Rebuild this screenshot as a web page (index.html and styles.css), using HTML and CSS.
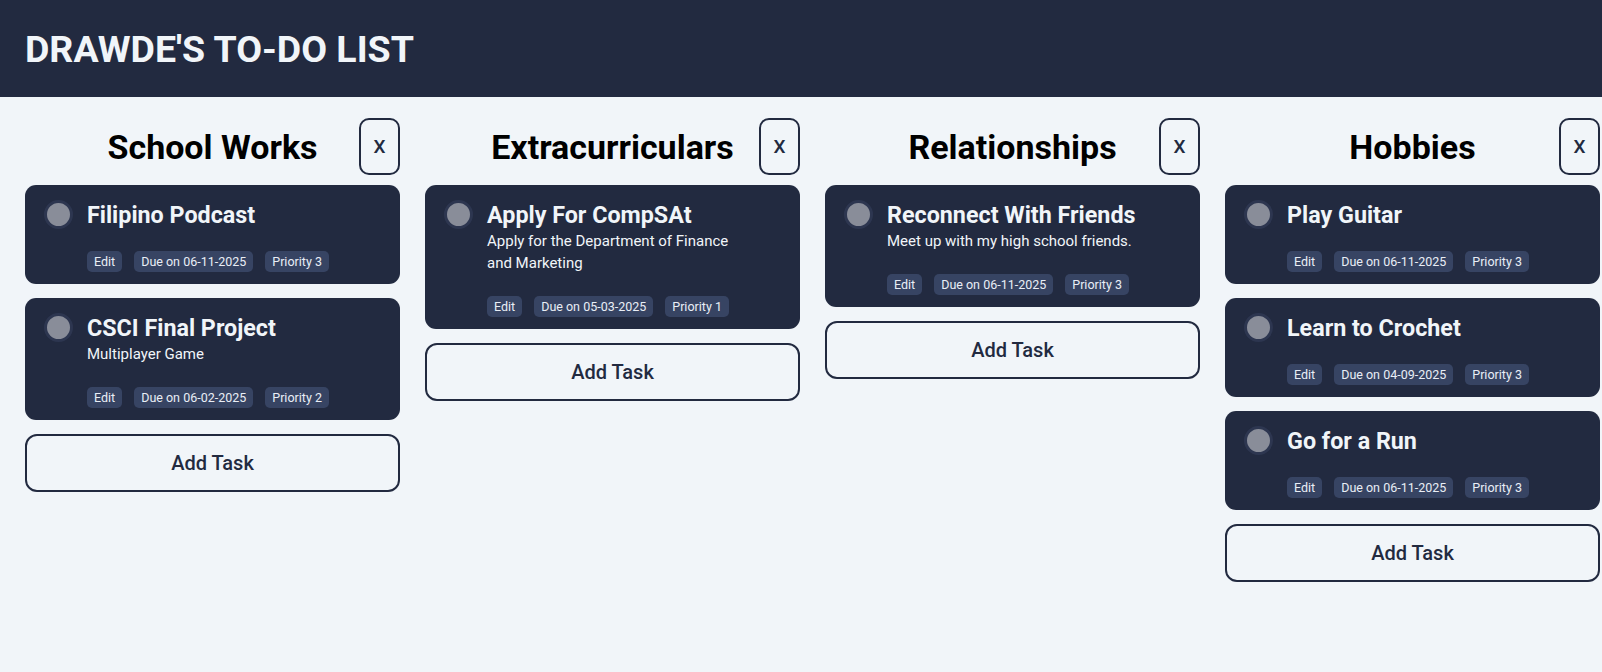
FILE: index.html
```html
<!DOCTYPE html>
<html lang="en">
<head>
<meta charset="utf-8">
<title>Drawde's To-Do List</title>
<link rel="stylesheet" href="styles.css">
</head>
<body>
<header class="topbar">
  <h1 class="app-title">DRAWDE'S TO-DO LIST</h1>
</header>
<main class="board">
  <section class="column">
    <div class="column-head">
      <h2 class="column-title">School Works</h2>
      <button class="close-btn">X</button>
    </div>
    <div class="task">
      <span class="check"></span>
      <div class="task-body">
        <div class="task-title">Filipino Podcast</div>
        <div class="tags"><span class="tag">Edit</span><span class="tag">Due on 06-11-2025</span><span class="tag">Priority 3</span></div>
      </div>
    </div>
    <div class="task">
      <span class="check"></span>
      <div class="task-body">
        <div class="task-title">CSCI Final Project</div>
        <div class="task-desc">Multiplayer Game</div>
        <div class="tags"><span class="tag">Edit</span><span class="tag">Due on 06-02-2025</span><span class="tag">Priority 2</span></div>
      </div>
    </div>
    <button class="add-btn">Add Task</button>
  </section>

  <section class="column">
    <div class="column-head">
      <h2 class="column-title">Extracurriculars</h2>
      <button class="close-btn">X</button>
    </div>
    <div class="task">
      <span class="check"></span>
      <div class="task-body">
        <div class="task-title">Apply For CompSAt</div>
        <div class="task-desc">Apply for the Department of Finance and Marketing</div>
        <div class="tags"><span class="tag">Edit</span><span class="tag">Due on 05-03-2025</span><span class="tag">Priority 1</span></div>
      </div>
    </div>
    <button class="add-btn">Add Task</button>
  </section>

  <section class="column">
    <div class="column-head">
      <h2 class="column-title">Relationships</h2>
      <button class="close-btn">X</button>
    </div>
    <div class="task">
      <span class="check"></span>
      <div class="task-body">
        <div class="task-title">Reconnect With Friends</div>
        <div class="task-desc">Meet up with my high school friends.</div>
        <div class="tags"><span class="tag">Edit</span><span class="tag">Due on 06-11-2025</span><span class="tag">Priority 3</span></div>
      </div>
    </div>
    <button class="add-btn">Add Task</button>
  </section>

  <section class="column">
    <div class="column-head">
      <h2 class="column-title">Hobbies</h2>
      <button class="close-btn">X</button>
    </div>
    <div class="task">
      <span class="check"></span>
      <div class="task-body">
        <div class="task-title">Play Guitar</div>
        <div class="tags"><span class="tag">Edit</span><span class="tag">Due on 06-11-2025</span><span class="tag">Priority 3</span></div>
      </div>
    </div>
    <div class="task">
      <span class="check"></span>
      <div class="task-body">
        <div class="task-title">Learn to Crochet</div>
        <div class="tags"><span class="tag">Edit</span><span class="tag">Due on 04-09-2025</span><span class="tag">Priority 3</span></div>
      </div>
    </div>
    <div class="task">
      <span class="check"></span>
      <div class="task-body">
        <div class="task-title">Go for a Run</div>
        <div class="tags"><span class="tag">Edit</span><span class="tag">Due on 06-11-2025</span><span class="tag">Priority 3</span></div>
      </div>
    </div>
    <button class="add-btn">Add Task</button>
  </section>
</main>
</body>
</html>
```

FILE: styles.css
```css
* { box-sizing: border-box; }

html, body {
  margin: 0;
  padding: 0;
}

body {
  background: #f1f5f9;
  font-family: Roboto, "Liberation Sans", Arial, sans-serif;
  color: #222a3f;
  overflow: hidden;
}

.topbar {
  background: #222a40;
  height: 97px;
  display: flex;
  align-items: center;
  padding: 0 25px;
}

.app-title {
  margin: 0;
  color: #f1f5f9;
  font-size: 37.5px;
  font-weight: 700;
  letter-spacing: 0;
}

.board {
  display: grid;
  grid-template-columns: repeat(4, 375px);
  column-gap: 25px;
  padding: 21px 0 0 25px;
  align-items: start;
}

.column {
  display: flex;
  flex-direction: column;
  gap: 14px;
}

.column-head {
  position: relative;
  height: 57px;
  display: flex;
  align-items: center;
  justify-content: center;
  margin-bottom: -4px;
}

.column-title {
  margin: 0;
  font-size: 34px;
  font-weight: 700;
  color: #000;
}

.close-btn {
  position: absolute;
  right: 0;
  top: 0;
  width: 41px;
  height: 57px;
  border: 2px solid #222a40;
  border-radius: 10px;
  background: transparent;
  font-family: inherit;
  font-size: 19px;
  font-weight: 500;
  color: #222a40;
  padding: 0;
}

.task {
  background: #222a40;
  border-radius: 11px;
  display: flex;
  align-items: flex-start;
  gap: 14px;
  padding: 15px 20px 12px 19px;
}

.check {
  flex: 0 0 auto;
  width: 29px;
  height: 29px;
  border-radius: 50%;
  background: #898d99;
  border: 3px solid #2d3650;
}

.task-body {
  display: flex;
  flex-direction: column;
  padding-top: 1px;
}

.task-title {
  color: #f1f5f9;
  font-size: 23.3px;
  font-weight: 700;
  line-height: 28px;
}

.task-desc {
  color: #f1f5f9;
  font-size: 15px;
  line-height: 22px;
  max-width: 265px;
  margin-top: 1px;
}

.tags {
  display: flex;
  gap: 12px;
  margin-top: 22px;
}

.tag {
  background: #374463;
  color: #e9eef6;
  font-size: 12.5px;
  line-height: 21px;
  height: 21px;
  padding: 0 7px;
  border-radius: 5px;
}

.add-btn {
  height: 58px;
  border: 2px solid #222a40;
  border-radius: 12px;
  background: transparent;
  font-family: inherit;
  font-size: 20px;
  font-weight: 500;
  color: #222a40;
  padding: 0;
}
```
